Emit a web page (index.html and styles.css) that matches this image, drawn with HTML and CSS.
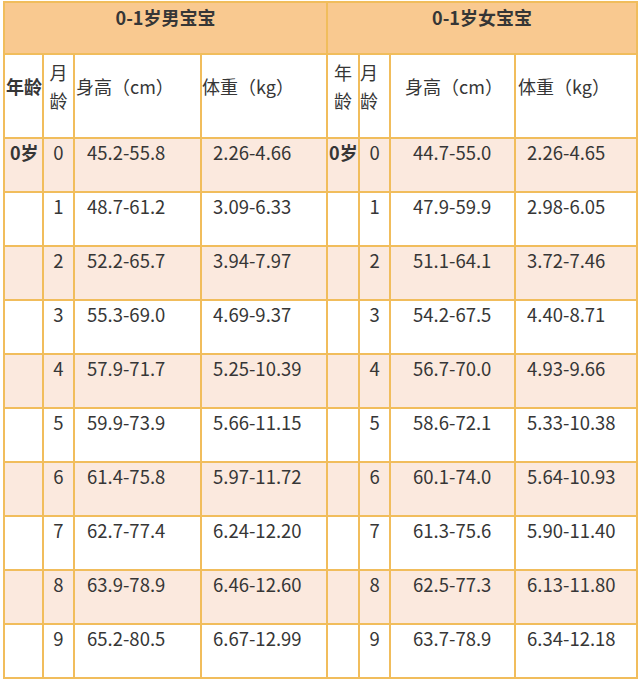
FILE: index.html
```html
<!DOCTYPE html>
<html lang="zh">
<head>
<meta charset="utf-8">
<title>0-1岁宝宝身高体重</title>
<link rel="stylesheet" href="styles.css">
</head>
<body>
<table class="growth">
  <colgroup>
    <col class="c-age-l"><col class="c-mon-l"><col class="c-h-l"><col class="c-w-l">
    <col class="c-age-r"><col class="c-mon-r"><col class="c-h-r"><col class="c-w-r">
  </colgroup>
  <thead>
    <tr class="group-row">
      <th colspan="4" class="group">0-1岁男宝宝</th>
      <th colspan="4" class="group">0-1岁女宝宝</th>
    </tr>
    <tr class="head-row">
      <th class="h-age-l">年龄</th>
      <th class="h-mon-l">月龄</th>
      <th class="h-h-l">身高（cm）</th>
      <th class="h-w-l">体重（kg）</th>
      <th class="h-age-r">年龄</th>
      <th class="h-mon-r">月龄</th>
      <th class="h-h-r">身高（cm）</th>
      <th class="h-w-r">体重（kg）</th>
    </tr>
  </thead>
  <tbody>
    <tr class="stripe">
      <td class="d-age-l">0岁</td><td class="d-mon">0</td><td class="d-h-l">45.2-55.8</td><td class="d-w-l">2.26-4.66</td>
      <td class="d-age-r">0岁</td><td class="d-mon">0</td><td class="d-h-r">44.7-55.0</td><td class="d-w-r">2.26-4.65</td>
    </tr>
    <tr>
      <td class="d-age-l"></td><td class="d-mon">1</td><td class="d-h-l">48.7-61.2</td><td class="d-w-l">3.09-6.33</td>
      <td class="d-age-r"></td><td class="d-mon">1</td><td class="d-h-r">47.9-59.9</td><td class="d-w-r">2.98-6.05</td>
    </tr>
    <tr class="stripe">
      <td class="d-age-l"></td><td class="d-mon">2</td><td class="d-h-l">52.2-65.7</td><td class="d-w-l">3.94-7.97</td>
      <td class="d-age-r"></td><td class="d-mon">2</td><td class="d-h-r">51.1-64.1</td><td class="d-w-r">3.72-7.46</td>
    </tr>
    <tr>
      <td class="d-age-l"></td><td class="d-mon">3</td><td class="d-h-l">55.3-69.0</td><td class="d-w-l">4.69-9.37</td>
      <td class="d-age-r"></td><td class="d-mon">3</td><td class="d-h-r">54.2-67.5</td><td class="d-w-r">4.40-8.71</td>
    </tr>
    <tr class="stripe">
      <td class="d-age-l"></td><td class="d-mon">4</td><td class="d-h-l">57.9-71.7</td><td class="d-w-l">5.25-10.39</td>
      <td class="d-age-r"></td><td class="d-mon">4</td><td class="d-h-r">56.7-70.0</td><td class="d-w-r">4.93-9.66</td>
    </tr>
    <tr>
      <td class="d-age-l"></td><td class="d-mon">5</td><td class="d-h-l">59.9-73.9</td><td class="d-w-l">5.66-11.15</td>
      <td class="d-age-r"></td><td class="d-mon">5</td><td class="d-h-r">58.6-72.1</td><td class="d-w-r">5.33-10.38</td>
    </tr>
    <tr class="stripe">
      <td class="d-age-l"></td><td class="d-mon">6</td><td class="d-h-l">61.4-75.8</td><td class="d-w-l">5.97-11.72</td>
      <td class="d-age-r"></td><td class="d-mon">6</td><td class="d-h-r">60.1-74.0</td><td class="d-w-r">5.64-10.93</td>
    </tr>
    <tr>
      <td class="d-age-l"></td><td class="d-mon">7</td><td class="d-h-l">62.7-77.4</td><td class="d-w-l">6.24-12.20</td>
      <td class="d-age-r"></td><td class="d-mon">7</td><td class="d-h-r">61.3-75.6</td><td class="d-w-r">5.90-11.40</td>
    </tr>
    <tr class="stripe">
      <td class="d-age-l"></td><td class="d-mon">8</td><td class="d-h-l">63.9-78.9</td><td class="d-w-l">6.46-12.60</td>
      <td class="d-age-r"></td><td class="d-mon">8</td><td class="d-h-r">62.5-77.3</td><td class="d-w-r">6.13-11.80</td>
    </tr>
    <tr>
      <td class="d-age-l"></td><td class="d-mon">9</td><td class="d-h-l">65.2-80.5</td><td class="d-w-l">6.67-12.99</td>
      <td class="d-age-r"></td><td class="d-mon">9</td><td class="d-h-r">63.7-78.9</td><td class="d-w-r">6.34-12.18</td>
    </tr>
  </tbody>
</table>
</body>
</html>
```
FILE: styles.css
```css
html, body {
  margin: 0;
  padding: 0;
  background: #ffffff;
}
body {
  font-family: "Noto Sans CJK SC", "Noto Sans", sans-serif;
  color: #363636;
  font-size: 18px;
}
.growth {
  margin: 1px 0 0 3px;
  border-collapse: collapse;
  table-layout: fixed;
  width: 633px;
}
.growth th,
.growth td {
  border: 2px solid #f1bd5c;
  padding: 0;
  font-weight: normal;
  text-align: left;
  overflow: hidden;
  white-space: normal;
}
.c-age-l { width: 39px; }
.c-mon-l { width: 31px; }
.c-h-l { width: 127px; }
.c-w-l { width: 126px; }
.c-age-r { width: 32px; }
.c-mon-r { width: 31px; }
.c-h-r { width: 125px; }
.c-w-r { width: 122px; }

.group-row { height: 52px; }
.group {
  background: #f9c990;
  font-weight: bold !important;
  text-align: center !important;
  vertical-align: top;
  line-height: 24px;
  padding-top: 2px !important;
}
.head-row { height: 84px; }
.head-row th {
  vertical-align: middle;
  line-height: 28px;
  padding-bottom: 20px;
}
.h-age-l { font-weight: bold !important; padding-left: 1px !important; white-space: nowrap; }
.h-mon-l { text-align: center !important; }
.h-h-l { padding-left: 1px !important; }
.h-w-l { padding-left: 0; }
.h-age-r { text-align: center !important; }
.h-mon-r { padding-left: 0; }
.h-h-r { padding-left: 14px !important; }
.h-w-r { padding-left: 2px !important; }

tbody tr { height: 54px; }
tbody td {
  vertical-align: top;
  line-height: 24px;
  font-size: 18.5px;
  padding-top: 1px !important;
}
.stripe td { background: #fbe9de; }
.d-age-l { font-weight: bold !important; font-size: 18px !important; padding-left: 5px !important; white-space: nowrap; }
.d-age-r { font-weight: bold !important; font-size: 18px !important; padding-left: 1px !important; white-space: nowrap; }
.d-mon { text-align: center !important; }
.d-h-l { padding-left: 12px !important; }
.d-w-l { padding-left: 11px !important; }
.d-h-r { padding-left: 22px !important; }
.d-w-r { padding-left: 11px !important; }
```
